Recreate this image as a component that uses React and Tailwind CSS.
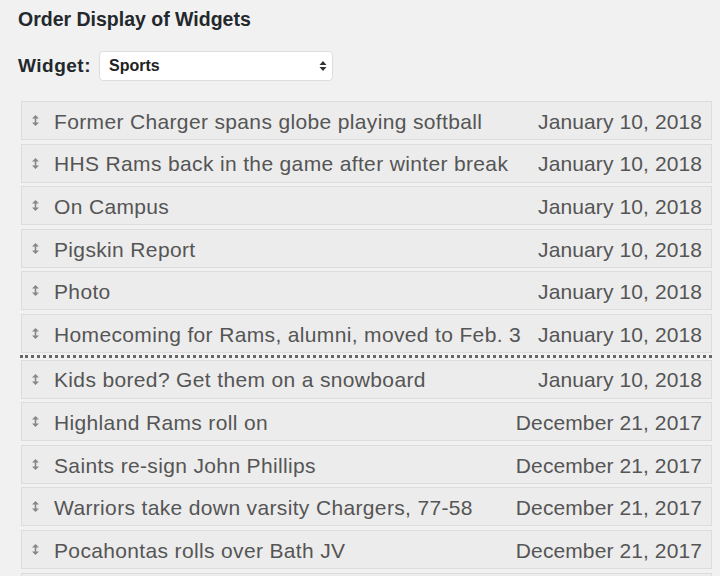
import React from 'react';

const items = [
  { title: 'Former Charger spans globe playing softball', date: 'January 10, 2018' },
  { title: 'HHS Rams back in the game after winter break', date: 'January 10, 2018' },
  { title: 'On Campus', date: 'January 10, 2018' },
  { title: 'Pigskin Report', date: 'January 10, 2018' },
  { title: 'Photo', date: 'January 10, 2018' },
  { title: 'Homecoming for Rams, alumni, moved to Feb. 3', date: 'January 10, 2018' },
  { title: 'Kids bored? Get them on a snowboard', date: 'January 10, 2018' },
  { title: 'Highland Rams roll on', date: 'December 21, 2017' },
  { title: 'Saints re-sign John Phillips', date: 'December 21, 2017' },
  { title: 'Warriors take down varsity Chargers, 77-58', date: 'December 21, 2017' },
  { title: 'Pocahontas rolls over Bath JV', date: 'December 21, 2017' },
  { title: '', date: '' },
];

const Handle = () => (
  <svg width="7" height="11" viewBox="0 0 7 11" className="shrink-0">
    <path d="M3.5 0 L7 3.5 L0 3.5 Z M0 7.5 L7 7.5 L3.5 11 Z" fill="#888" />
    <rect x="2.7" y="3" width="1.6" height="5" fill="#888" />
  </svg>
);

const Row = ({ title, date }) => (
  <div className="flex items-center h-[39px] mb-[3.6px] border border-[#dcdcdc] bg-[#ececec] pl-[9px] pr-[9px] pt-[2px]">
    {title && (
      <>
        <span className="w-[23px] flex items-center justify-start pl-[1px] -mt-[2px]">
          <Handle />
        </span>
        <span className="flex-1 truncate text-[21px] tracking-[0.35px] text-[#555]">{title}</span>
        <span className="text-[21px] tracking-[0.1px] text-[#555] whitespace-nowrap pl-3">{date}</span>
      </>
    )}
  </div>
);

export default function App() {
  return (
    <div className="w-[720px] h-[576px] overflow-hidden bg-[#f1f1f1] font-['Liberation_Sans',Arial,sans-serif]">
      <div className="pl-[18px] pt-[8px]">
        <h2 className="text-[19.5px] font-bold text-[#23282d] leading-[22px]">Order Display of Widgets</h2>
        <div className="flex items-center mt-[21px]">
          <label className="text-[19px] tracking-[0.5px] font-bold text-[#23282d] mr-[8px]">Widget:</label>
          <div className="w-[234px] h-[30px] bg-white border border-[#dddddd] rounded-[4px] flex items-center justify-between pl-[9px] pr-[5px]">
            <span className="text-[16px] font-bold text-[#222]">Sports</span>
            <svg width="8" height="12" viewBox="0 0 8 12">
              <path d="M4 1 L7.5 5 L0.5 5 Z M0.5 7 L7.5 7 L4 11 Z" fill="#333" />
            </svg>
          </div>
        </div>
      </div>
      <div className="pl-[21px] pr-[8px] mt-[20px]">
        {items.slice(0, 6).map((it, i) => (
          <Row key={i} {...it} />
        ))}
        <div className="h-[3px] border-t-[3px] border-dotted border-[#666] -mt-[2px] mb-[2px] -ml-[1px]" />
        {items.slice(6).map((it, i) => (
          <Row key={i + 6} {...it} />
        ))}
      </div>
    </div>
  );
}
